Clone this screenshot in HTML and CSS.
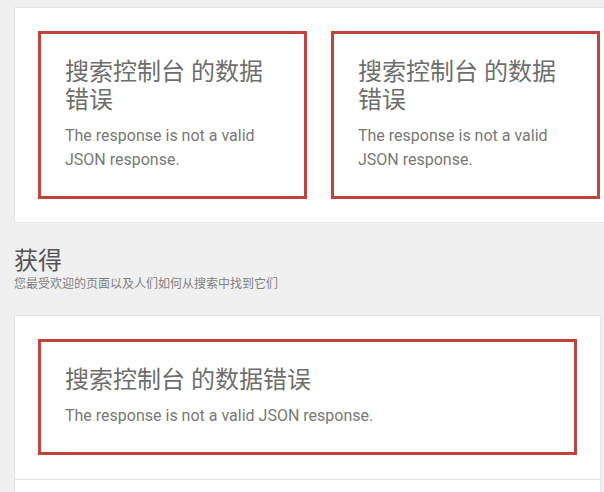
FILE: index.html
```html
<!DOCTYPE html>
<html lang="zh-CN">
<head>
<meta charset="utf-8">
<link rel="stylesheet" href="styles.css">
</head>
<body>
<main class="page">
  <section class="card card-top">
    <div class="error-box half">
      <h3 class="error-title">搜索控制台 的数据错误</h3>
      <p class="error-text">The response is not a valid JSON response.</p>
    </div>
    <div class="error-box half">
      <h3 class="error-title">搜索控制台 的数据错误</h3>
      <p class="error-text">The response is not a valid JSON response.</p>
    </div>
  </section>

  <header class="section-head">
    <h2 class="section-title">获得</h2>
    <p class="section-sub">您最受欢迎的页面以及人们如何从搜索中找到它们</p>
  </header>

  <section class="card card-bottom">
    <div class="card-body">
      <div class="error-box">
        <h3 class="error-title">搜索控制台 的数据错误</h3>
        <p class="error-text">The response is not a valid JSON response.</p>
      </div>
    </div>
    <div class="card-foot"></div>
  </section>
</main>
</body>
</html>
```

FILE: styles.css
```css
html, body {
  margin: 0;
  padding: 0;
  overflow: hidden;
  background: #f0f0f0;
}

.page {
  padding: 7px 0 0 14px;
  font-family: Roboto, "Noto Sans CJK SC", sans-serif;
}

.card {
  background: #ffffff;
  border: 1px solid #e6e6e6;
  box-sizing: border-box;
}

.card-top {
  width: 610px;
  padding: 23px;
  display: flex;
  gap: 24px;
}

.error-box {
  border: 3px solid #c1433b;
  padding: 24px;
  box-sizing: border-box;
}

.half {
  flex: 0 0 269px;
}

.error-title {
  margin: 0 0 10px;
  font-family: Roboto, "Noto Sans CJK SC", sans-serif;
  font-weight: 400;
  font-size: 24px;
  line-height: 28px;
  color: #6e6e6e;
}

.error-text {
  margin: 0;
  font-size: 16px;
  line-height: 24px;
  color: #787878;
}

.section-head {
  margin: 22px 0 24px;
}

.section-title {
  margin: 0 0 2px;
  font-family: "Noto Sans CJK SC", sans-serif;
  font-weight: 400;
  font-size: 24px;
  line-height: 28px;
  color: #555555;
}

.section-sub {
  margin: 0;
  font-family: "Noto Sans CJK SC", sans-serif;
  font-size: 12px;
  line-height: 16px;
  color: #808080;
}

.card-bottom {
  width: 587px;
}

.card-body {
  padding: 23px 23px 24px;
}

.card-foot {
  border-top: 1px solid #e4e4e4;
  height: 40px;
}
```
